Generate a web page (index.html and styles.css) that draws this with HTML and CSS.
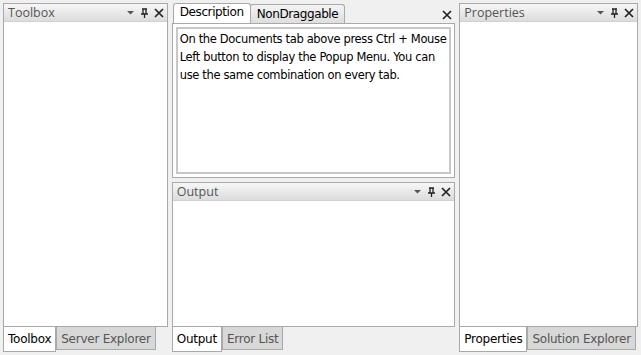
FILE: index.html
```html
<!DOCTYPE html>
<html lang="en">
<head>
    <meta charset="UTF-8">
    <title>Docking</title>
    <link rel="stylesheet" href="styles.css">
</head>
<body>
    <div class="column side left">
        <div class="pane">
            <div class="pane-header">
                <span class="pane-title">Toolbox</span>
                <span class="pane-buttons">
                    <svg width="9" height="9" viewBox="0 0 9 9"><path d="M1 3h7L4.5 6.5z" fill="#555"/></svg>
                    <svg width="9" height="10" viewBox="0 0 9 10"><path d="M2 1h5M3 1v5M6 1v5M1 6h7M4.5 6v4" stroke="#222" stroke-width="1.3" fill="none"/></svg>
                    <svg width="10" height="10" viewBox="0 0 10 10"><path d="M1 1l8 8M9 1l-8 8" stroke="#222" stroke-width="1.7"/></svg>
                </span>
            </div>
            <div class="pane-body"></div>
        </div>
        <div class="tabs bottom">
            <div class="tab selected">Toolbox</div>
            <div class="tab">Server Explorer</div>
        </div>
    </div>

    <div class="column center">
        <div class="documents">
            <div class="doc-strip">
                <div class="doc-tab selected">Description</div>
                <div class="doc-tab">NonDraggable</div>
                <svg class="doc-close" width="10" height="10" viewBox="0 0 10 10"><path d="M1 1l8 8M9 1l-8 8" stroke="#222" stroke-width="1.7"/></svg>
            </div>
            <div class="doc-body">
                <div class="doc-text">On the Documents tab above press Ctrl + Mouse Left button to display the Popup Menu. You can use the same combination on every tab.</div>
            </div>
        </div>
        <div class="pane output">
            <div class="pane-header">
                <span class="pane-title">Output</span>
                <span class="pane-buttons">
                    <svg width="9" height="9" viewBox="0 0 9 9"><path d="M1 3h7L4.5 6.5z" fill="#555"/></svg>
                    <svg width="9" height="10" viewBox="0 0 9 10"><path d="M2 1h5M3 1v5M6 1v5M1 6h7M4.5 6v4" stroke="#222" stroke-width="1.3" fill="none"/></svg>
                    <svg width="10" height="10" viewBox="0 0 10 10"><path d="M1 1l8 8M9 1l-8 8" stroke="#222" stroke-width="1.7"/></svg>
                </span>
            </div>
            <div class="pane-body"></div>
        </div>
        <div class="tabs bottom">
            <div class="tab selected">Output</div>
            <div class="tab">Error List</div>
        </div>
    </div>

    <div class="column side right">
        <div class="pane">
            <div class="pane-header">
                <span class="pane-title">Properties</span>
                <span class="pane-buttons">
                    <svg width="9" height="9" viewBox="0 0 9 9"><path d="M1 3h7L4.5 6.5z" fill="#555"/></svg>
                    <svg width="9" height="10" viewBox="0 0 9 10"><path d="M2 1h5M3 1v5M6 1v5M1 6h7M4.5 6v4" stroke="#222" stroke-width="1.3" fill="none"/></svg>
                    <svg width="10" height="10" viewBox="0 0 10 10"><path d="M1 1l8 8M9 1l-8 8" stroke="#222" stroke-width="1.7"/></svg>
                </span>
            </div>
            <div class="pane-body"></div>
        </div>
        <div class="tabs bottom">
            <div class="tab selected">Properties</div>
            <div class="tab">Solution Explorer</div>
        </div>
    </div>
</body>
</html>
```

FILE: styles.css
```css
html, body {
    height: 100%;
}
body {
    margin: 0;
    padding: 3px 3px 4px 3px;
    box-sizing: border-box;
    background-color: #f0f0f0;
    font-family: "DejaVu Sans", Verdana, sans-serif;
    font-size: 11px;
    display: flex;
    gap: 4px;
}
.column {
    display: flex;
    flex-direction: column;
}
.left {
    width: 165px;
}
.center {
    width: 284px;
}
.right {
    width: 179px;
}
.pane {
    flex: 1;
    display: flex;
    flex-direction: column;
    border: 1px solid #a9a9a9;
    background-color: #fff;
}
.pane-header {
    height: 17px;
    display: flex;
    align-items: center;
    padding: 0 3px 0 4px;
    background: linear-gradient(#f7f7f7, #dcdcdc);
    border-bottom: 1px solid #d0d0d0;
}
.pane-title {
    flex: 1;
    font-family: "Open Sans", sans-serif;
    font-size: 12.5px;
    color: #555;
}
.pane-buttons {
    display: flex;
    align-items: center;
    gap: 5px;
}
.pane-buttons svg {
    display: block;
}
.pane-body {
    flex: 1;
}
.tabs {
    display: flex;
    height: 24px;
}
.tab {
    padding: 5px 4px 0 4px;
    height: 17px;
    border: 1px solid #a9a9a9;
    border-top: none;
    background-color: #d8d8d8;
    color: #555;
    font-size: 12px;
    letter-spacing: -0.25px;
}
.tab.selected {
    background-color: #fff;
    color: #000;
    height: 19px;
}
.documents {
    height: 175px;
    display: flex;
    flex-direction: column;
}
.doc-strip {
    height: 20px;
    display: flex;
    align-items: flex-end;
    padding-left: 1px;
}
.doc-tab {
    height: 16px;
    padding: 2px 6px 0 6px;
    border: 1px solid #a9a9a9;
    border-bottom: none;
    border-radius: 3px 3px 0 0;
    background: linear-gradient(#f4f4f4, #dedede);
    font-size: 12px;
    letter-spacing: -0.4px;
}
.doc-tab.selected {
    height: 18px;
    padding-top: 1px;
    background: #fff;
    margin-right: -1px;
    position: relative;
    z-index: 1;
}
.doc-close {
    margin-left: auto;
    margin-right: 3px;
    align-self: center;
    margin-top: 3px;
}
.doc-body {
    flex: 1;
    border: 1px solid #a9a9a9;
    background-color: #fff;
    padding: 3px;
    display: flex;
}
.doc-text {
    flex: 1;
    border: 2px solid #c8c8c8;
    padding: 1px 0 0 2px;
    line-height: 18px;
    font-size: 11.5px;
    letter-spacing: -0.35px;
}
.output {
    margin-top: 4px;
}
```
